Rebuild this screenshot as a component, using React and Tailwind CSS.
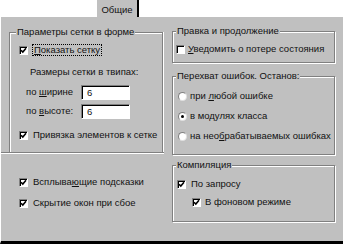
import React from "react";

const font = { fontFamily: '"Liberation Sans", Arial, sans-serif' };

function Check({ checked }) {
  return (
    <span className="w-[9px] h-[9px] shrink-0 bg-white border border-t-[#808080] border-l-[#808080] border-r-white border-b-white shadow-[inset_1px_1px_0_#000] flex items-center justify-center">
      {checked && (
        <svg width="7" height="7" viewBox="0 0 7 7">
          <path d="M1 3.2 L2.8 5 L6 1.2" stroke="#000" strokeWidth="1.6" fill="none" />
        </svg>
      )}
    </span>
  );
}

function Radio({ selected }) {
  return (
    <span className="w-[9px] h-[9px] shrink-0 rounded-full bg-white border border-t-[#808080] border-l-[#808080] border-r-[#dfdfdf] border-b-[#dfdfdf] flex items-center justify-center">
      {selected && <span className="w-[3px] h-[3px] rounded-full bg-black" />}
    </span>
  );
}

function Field({ value }) {
  return (
    <div className="w-[49px] h-[15px] bg-white border border-t-[#808080] border-l-[#808080] border-r-white border-b-white shadow-[inset_1px_1px_0_#000] pl-[5px] leading-[13px]">
      {value}
    </div>
  );
}

function Group({ title, className = "", legendClass = "", children }) {
  return (
    <fieldset className={`border border-[#808080] shadow-[inset_1px_1px_0_#fff,1px_1px_0_#fff] ${className}`}>
      <legend className={`px-[1px] leading-[12px] bg-[#c0c0c0] ${legendClass}`}>{title}</legend>
      {children}
    </fieldset>
  );
}

export default function App() {
  return (
    <div style={font} className="w-[343px] h-[244px] flex flex-col bg-white text-[9.5px] text-[#111] overflow-hidden">
      <div className="h-[17px] flex shrink-0">
        <div className="w-[97px]" />
        <div className="w-[42px] bg-[#c0c0c0] border-r-2 border-black flex items-center justify-center leading-[12px] pt-[2px]">
          Общие
        </div>
      </div>

      <div className="flex-1 bg-[#c0c0c0] border-l border-white border-b-[3px] border-b-black flex">
        {/* left column */}
        <div className="w-[163px] flex flex-col pt-[9px]">
          <div className="border-b border-[#808080] shadow-[0_1px_0_#fff] pl-[8px]">
            <fieldset className="w-[154px] border border-b-0 border-[#808080] shadow-[inset_1px_1px_0_#fff,1px_0_0_#fff] pb-[11px]">
              <legend className="ml-[6px] px-[1px] leading-[12px] bg-[#c0c0c0]">Параметры сетки в форме</legend>
              <div className="flex flex-col pl-[9px]">
                <div className="mt-[6px] h-[12px] flex items-center gap-[4px]">
                  <Check checked />
                  <span className="border border-dotted border-black px-[1px] leading-[10px] h-[12px] whitespace-nowrap">
                    <span className="underline">П</span>оказать сетку
                  </span>
                </div>
                <div className="mt-[10px] h-[12px] leading-[12px] pl-[11px] whitespace-nowrap">
                  Размеры сетки в твипах:
                </div>
                <div className="mt-[7px] flex items-center">
                  <span className="w-[62px] pl-[7px] whitespace-nowrap">
                    по <span className="underline">ш</span>ирине
                  </span>
                  <Field value="6" />
                </div>
                <div className="mt-[4px] flex items-center">
                  <span className="w-[62px] pl-[7px] whitespace-nowrap">
                    по <span className="underline">в</span>ысоте:
                  </span>
                  <Field value="6" />
                </div>
                <div className="mt-[10px] h-[12px] flex items-center gap-[5px]">
                  <Check checked />
                  <span className="leading-[12px] whitespace-nowrap">Привязка элементов к сетке</span>
                </div>
              </div>
            </fieldset>
          </div>

          <div className="pl-[18px] flex flex-col">
            <div className="mt-[23px] h-[12px] flex items-center gap-[5px]">
              <Check checked />
              <span className="leading-[12px] whitespace-nowrap">
                Всплыва<span className="underline">ю</span>щие подсказки
              </span>
            </div>
            <div className="mt-[9px] h-[12px] flex items-center gap-[5px]">
              <Check checked />
              <span className="leading-[12px] whitespace-nowrap">Скрытие окон при сбое</span>
            </div>
          </div>
        </div>

        {/* right column */}
        <div className="ml-[8px] w-[163px] flex flex-col pt-[8px]">
          <Group title="Правка и продолжение" className="pb-[7px]" legendClass="ml-[3px]">
            <div className="mt-[6px] h-[12px] pl-[3px] pr-[4px] flex items-center gap-[3px] overflow-hidden">
              <Check />
              <span className="leading-[12px] whitespace-nowrap">
                <span className="underline">У</span>ведомить о потере состояния
              </span>
            </div>
          </Group>

          <Group title="Перехват ошибок. Останов:" className="mt-[7px] pb-[12px]" legendClass="ml-[3px]">
            <div className="flex flex-col pl-[5px]">
              <div className="mt-[8px] h-[12px] flex items-center gap-[3px]">
                <Radio />
                <span className="leading-[12px] whitespace-nowrap">
                  при <span className="underline">л</span>юбой ошибке
                </span>
              </div>
              <div className="mt-[8px] h-[12px] flex items-center gap-[3px]">
                <Radio selected />
                <span className="leading-[12px] whitespace-nowrap">в модулях класса</span>
              </div>
              <div className="mt-[8px] h-[12px] flex items-center gap-[3px]">
                <Radio />
                <span className="leading-[12px] whitespace-nowrap">
                  на нео<span className="underline">б</span>рабатываемых ошибках
                </span>
              </div>
            </div>
          </Group>

          <Group title="Компиляция" className="mt-[4px] pb-[13px]" legendClass="ml-[3px]">
            <div className="flex flex-col">
              <div className="mt-[7px] h-[12px] pl-[4px] flex items-center gap-[5px]">
                <Check checked />
                <span className="leading-[12px] whitespace-nowrap">По запросу</span>
              </div>
              <div className="mt-[6px] h-[12px] pl-[19px] flex items-center gap-[4px]">
                <Check checked />
                <span className="leading-[12px] whitespace-nowrap">В фоновом режиме</span>
              </div>
            </div>
          </Group>
        </div>
      </div>
    </div>
  );
}
